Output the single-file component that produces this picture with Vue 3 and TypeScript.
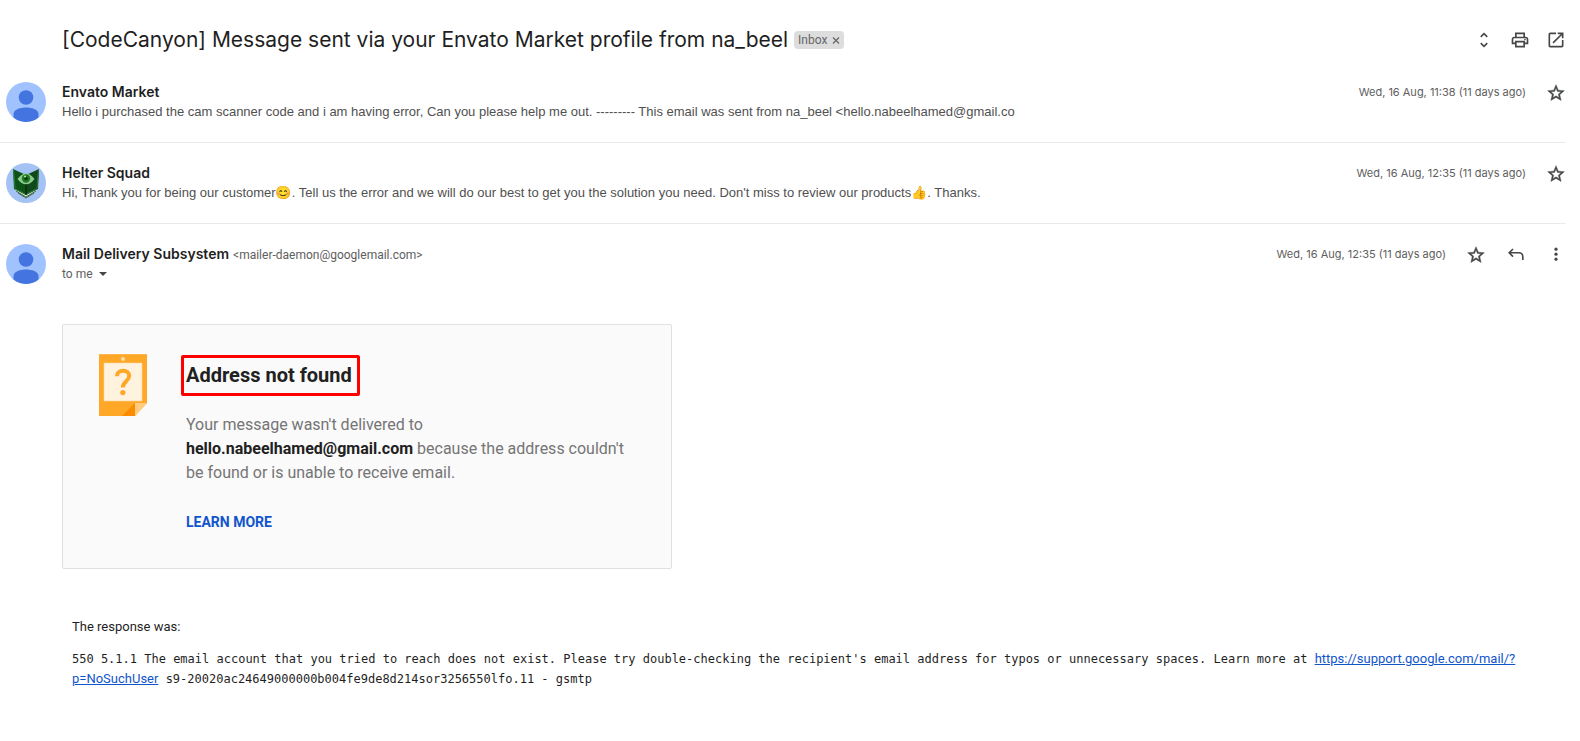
<script setup lang="ts">
interface Message {
  id: number
  sender: string
  preview: string
  date: string
  avatar: 'person' | 'shield'
}

const subject = '[CodeCanyon] Message sent via your Envato Market profile from na_beel'

const collapsed: Message[] = [
  {
    id: 1,
    sender: 'Envato Market',
    preview:
      'Hello i purchased the cam scanner code and i am having error, Can you please help me out. --------- This email was sent from na_beel <hello.nabeelhamed@gmail.co',
    date: 'Wed, 16 Aug, 11:38 (11 days ago)',
    avatar: 'person',
  },
  {
    id: 2,
    sender: 'Helter Squad',
    preview:
      "Hi, Thank you for being our customer😊. Tell us the error and we will do our best to get you the solution you need. Don't miss to review our products👍. Thanks.",
    date: 'Wed, 16 Aug, 12:35 (11 days ago)',
    avatar: 'shield',
  },
]

const starPath =
  'M22 9.24l-7.19-.62L12 2 9.19 8.63 2 9.24l5.46 4.73L5.82 21 12 17.27 18.18 21l-1.63-7.03L22 9.24zM12 15.4l-3.76 2.27 1-4.28-3.32-2.88 4.38-.38L12 6.1l1.71 4.04 4.38.38-3.32 2.88 1 4.28L12 15.4z'
</script>

<template>
  <main class="thread">
    <header class="subject-row">
      <h1 class="subject">{{ subject }}</h1>
      <span class="chip">
        Inbox
        <button class="chip-remove" type="button" aria-label="Remove label Inbox">
          <svg viewBox="0 0 8 8" width="8" height="8"><path d="M1 1.500l6 6M7 1.500L1 7.500" fill="none" stroke="#666" stroke-width="1.2" /></svg>
        </button>
      </span>
      <div class="actions">
        <button class="icon" type="button" aria-label="Expand all">
          <svg viewBox="0 0 24 24"><path d="M12 5.83L15.17 9l1.41-1.41L12 3 7.41 7.59 8.83 9 12 5.83zm0 12.34L8.83 15l-1.41 1.41L12 21l4.59-4.59L15.17 15 12 18.17z" /></svg>
        </button>
        <button class="icon" type="button" aria-label="Print all">
          <svg viewBox="0 0 24 24"><path fill-rule="evenodd" d="M19 8h-1V3H6v5H5c-1.66 0-3 1.34-3 3v6h4v4h12v-4h4v-6c0-1.66-1.34-3-3-3zM8 5h8v3H8V5zm8 14H8v-4h8v4zm2-4v-2H6v2H4v-4c0-.55.45-1 1-1h14c.55 0 1 .45 1 1v4h-2z" /><circle cx="18" cy="11.5" r="1" /></svg>
        </button>
        <button class="icon" type="button" aria-label="Open in new window">
          <svg viewBox="0 0 24 24"><path d="M19 19H5V5h7V3H5a2 2 0 0 0-2 2v14a2 2 0 0 0 2 2h14c1.1 0 2-.9 2-2v-7h-2v7zM14 3v2h3.59l-9.83 9.83 1.41 1.41L19 6.41V10h2V3h-7z" /></svg>
        </button>
      </div>
    </header>

    <article v-for="m in collapsed" :key="m.id" class="message">
      <svg v-if="m.avatar === 'person'" class="avatar" viewBox="0 0 40 40" aria-hidden="true">
        <circle cx="20" cy="20" r="20" fill="#a0c3ff" />
        <circle cx="20" cy="15.5" r="7.3" fill="#4374e0" />
        <path d="M7.500 35.600V32c0-4.500 7-6.500 12.500-6.500S32.500 27.500 32.500 32v3.600A20 20 0 0 1 7.500 35.600z" fill="#4374e0" />
      </svg>
      <svg v-else class="avatar" viewBox="0 0 40 40" aria-hidden="true">
        <circle cx="20" cy="20" r="20" fill="#a4c2f4" />
        <path d="M9 27l11 8.500L31 27v-3H9z" fill="#d5dfd8" />
        <path d="M10 28l10 6 10-6M12 30l8 5 8-5" fill="none" stroke="#3c6b46" stroke-width="1" />
        <path d="M7 6l13 6v20L8 26z" fill="#0d5317" />
        <path d="M33 6l-13 6v20l12-6z" fill="#12491c" />
        <path d="M7.500 6.500L9 25.500l11 6 11-6 1.500-19" fill="none" stroke="#2d7a3a" stroke-width="1" />
        <path d="M20 20v12" stroke="#062f0c" stroke-width="1.500" />
        <path d="M11.500 16c5-7.500 12-7.500 17 0-5 7-12 7-17 0z" fill="#8cc98c" />
        <circle cx="20" cy="15.500" r="4.200" fill="#1e7a23" />
        <circle cx="20" cy="15.500" r="1.800" fill="#07390c" />
        <circle cx="19" cy="13.500" r="1" fill="#b9edb0" />
      </svg>
      <div class="text">
        <h2 class="sender">{{ m.sender }}</h2>
        <p class="preview">{{ m.preview }}</p>
      </div>
      <div class="meta">
        <time class="date">{{ m.date }}</time>
        <button class="icon" type="button" aria-label="Not starred"><svg class="star" viewBox="0 0 24 24"><path :d="starPath" /></svg></button>
      </div>
    </article>

    <article class="message open">
      <svg class="avatar" viewBox="0 0 40 40" aria-hidden="true">
        <circle cx="20" cy="20" r="20" fill="#a0c3ff" />
        <circle cx="20" cy="15.5" r="7.3" fill="#4374e0" />
        <path d="M7.500 35.600V32c0-4.500 7-6.500 12.500-6.500S32.500 27.500 32.500 32v3.600A20 20 0 0 1 7.500 35.600z" fill="#4374e0" />
      </svg>
      <div class="text">
        <div class="from">
          <h2 class="sender">Mail Delivery Subsystem</h2>
          <span class="address">&lt;mailer-daemon@googlemail.com&gt;</span>
        </div>
        <button class="recipient" type="button">
          to me
          <svg viewBox="0 0 8 4" width="8" height="4"><path d="M0 0h8L4 4z" fill="#444746" /></svg>
        </button>
      </div>
      <div class="meta">
        <time class="date">Wed, 16 Aug, 12:35 (11 days ago)</time>
        <button class="icon" type="button" aria-label="Not starred"><svg class="star" viewBox="0 0 24 24"><path :d="starPath" /></svg></button>
        <button class="icon" type="button" aria-label="Reply">
          <svg viewBox="0 0 20 20"><path d="M7 4L3.200 7.800 7 11.600M3.200 7.800H13a3.800 3.800 0 0 1 3.800 3.800V15" fill="none" stroke="#444746" stroke-width="1.600" /></svg>
        </button>
        <button class="icon" type="button" aria-label="More">
          <svg viewBox="0 0 20 20"><circle cx="10" cy="4.200" r="1.600" /><circle cx="10" cy="9.200" r="1.600" /><circle cx="10" cy="14.200" r="1.600" /></svg>
        </button>
      </div>
    </article>

    <section class="notice">
      <svg class="notice-art" viewBox="0 0 48 62" aria-hidden="true">
        <path d="M0 0h48v49L36 62H0z" fill="#ffa726" />
        <path d="M0 0h48v1H0z" fill="#ffb74d" />
        <rect x="5" y="9" width="38" height="38" fill="#fff3e0" />
        <path d="M5 9h38v38H5z" fill="none" stroke="#ffd9a0" stroke-width=".6" />
        <circle cx="24" cy="5" r="2" fill="#ffe0b2" />
        <path d="M36 49L23 62h13z" fill="#fb8c00" />
        <path d="M36 49h12L36 62z" fill="#ffcc80" />
        <path d="M18 22.200c0-3.500 2.500-5.400 6-5.400s6.200 1.900 6.200 5.200c0 5-6.400 5.500-6.400 11.500" fill="none" stroke="#ffa726" stroke-width="4" />
        <circle cx="23.800" cy="38.600" r="2.600" fill="#ffa726" />
      </svg>
      <div class="notice-body">
        <h3 class="notice-title">Address not found</h3>
        <p class="notice-text">
          Your message wasn't delivered to <b>hello.nabeelhamed@gmail.com</b> because the address couldn't be found or is unable to receive email.
        </p>
        <a class="learn" href="#learn-more">LEARN MORE</a>
      </div>
    </section>

    <section class="response">
      <p class="response-label">The response was:</p>
      <p class="response-code">
        550 5.1.1 The email account that you tried to reach does not exist. Please try double-checking the recipient's email address for typos or unnecessary spaces. Learn more at
        <a href="https://support.google.com/mail/?p=NoSuchUser">https://support.google.com/mail/?<wbr>p=NoSuchUser</a>
        s9-20020ac24649000000b004fe9de8d214sor3256550lfo.11 - gsmtp
      </p>
    </section>
  </main>
</template>

<style>
body {
  margin: 0;
  background: #fff;
}
</style>

<style scoped>
.thread {
  padding: 18px 14px 48px 0;
  font-family: Roboto, 'Liberation Sans', sans-serif;
  color: #1f1f1f;
}
h1, h2, h3, p {
  margin: 0;
}
button {
  padding: 0;
  border: 0;
  background: none;
  font: inherit;
  color: inherit;
  cursor: pointer;
}
.subject-row {
  display: flex;
  align-items: center;
  height: 44px;
  padding-left: 62px;
}
.subject {
  font: 400 21px/28px Inter, sans-serif;
}
.chip {
  display: flex;
  align-items: center;
  gap: 5px;
  height: 18px;
  margin-left: 6px;
  padding: 0 4px;
  border-radius: 4px;
  background: #ddd;
  color: #666;
  font: 12px/18px Roboto, sans-serif;
}
.chip-remove {
  display: flex;
}
.actions {
  display: flex;
  gap: 16px;
  margin-left: auto;
}
.icon {
  display: block;
  width: 20px;
  height: 20px;
}
.icon svg {
  display: block;
  width: 100%;
  height: 100%;
  fill: #444746;
}
.icon .star {
  stroke: #444746;
  stroke-width: 0.5;
}
.message {
  display: flex;
  padding: 20px 0 20px 6px;
  border-bottom: 1px solid #e8eaed;
}
.message.open {
  border-bottom: 0;
}
.avatar {
  flex: none;
  width: 40px;
  height: 40px;
  margin-right: 16px;
}
.text {
  flex: 1;
  min-width: 0;
}
.sender {
  font: 600 14px/20px Inter, sans-serif;
}
.from {
  display: flex;
  align-items: baseline;
  gap: 4px;
  height: 20px;
}
.address {
  color: #5e5e5e;
  font-size: 12px;
  line-height: 18px;
}
.preview {
  overflow: hidden;
  color: #505050;
  font: 13px/19px 'Liberation Sans', 'Noto Color Emoji', sans-serif;
  white-space: nowrap;
}
.recipient {
  display: flex;
  align-items: center;
  gap: 6px;
  color: #5e5e5e;
  font-size: 12px;
  line-height: 20px;
}
.meta {
  display: flex;
  align-items: flex-start;
  gap: 20px;
  margin-left: 20px;
}
.meta .icon {
  margin-top: 1px;
}
.date {
  color: #5e5e5e;
  font: 11px/20px Inter, sans-serif;
  white-space: nowrap;
}
.notice {
  display: flex;
  box-sizing: border-box;
  max-width: 610px;
  margin: 20px 0 0 62px;
  padding: 29px 36px 36px;
  border: 1px solid #e0e0e0;
  border-radius: 2px;
  background: #fafafa;
}
.notice-art {
  flex: none;
  width: 48px;
  height: 62px;
}
.notice-body {
  padding-left: 39px;
}
.notice-title {
  width: fit-content;
  margin: 1px 0 17px -5px;
  padding: 0 5px 0 2px;
  border: 3px solid #f00;
  border-radius: 2px;
  font: 700 20px/35px Roboto, sans-serif;
  color: #212121;
}
.notice-text {
  font-size: 16px;
  line-height: 24px;
  color: #757575;
}
.notice-text b {
  color: #212121;
}
.learn {
  display: block;
  width: fit-content;
  margin-top: 27px;
  color: #15c;
  font-size: 14px;
  font-weight: 700;
  line-height: 20px;
  text-decoration: none;
}
.response {
  margin: 48px 40px 0 72px;
}
.response-label {
  font-size: 13px;
  line-height: 20px;
}
.response-code {
  margin-top: 12px;
  font: 12px/19px 'DejaVu Sans Mono', monospace;
}
.response-code a {
  color: #15c;
  font-family: Roboto, sans-serif;
  font-size: 13px;
}
</style>
